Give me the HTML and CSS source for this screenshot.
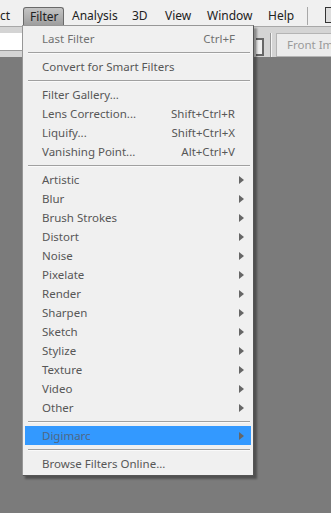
FILE: index.html
```html
<!DOCTYPE html>
<html lang="en">
<head>
  <meta charset="UTF-8" />
  <meta name="viewport" content="width=device-width, initial-scale=1.0" />
  <title>Filter menu</title>
  <link rel="stylesheet" href="styles.css">
</head>
<body>
  <div class="menubar">
    <span class="top-item cut">ct</span>
    <span class="top-item active">Filter</span>
    <span class="top-item w-analysis">Analysis</span>
    <span class="top-item w-3d">3D</span>
    <span class="top-item w-view">View</span>
    <span class="top-item w-window">Window</span>
    <span class="top-item w-help">Help</span>
    <span class="bar-sep"></span>
    <span class="bar-box"></span>
  </div>
  <div class="toolbar">
    <div class="field"></div>
    <div class="spacer"></div>
    <div class="spin"></div>
    <div class="tool-sep"></div>
    <div class="tool-btn">Front Image</div>
  </div>
  <div class="workspace"></div>

  <div class="dropdown">
    <div class="item disabled"><span>Last Filter</span><span class="key">Ctrl+F</span></div>
    <div class="sep"></div>
    <div class="item"><span>Convert for Smart Filters</span></div>
    <div class="sep"></div>
    <div class="item"><span>Filter Gallery...</span></div>
    <div class="item"><span>Lens Correction...</span><span class="key">Shift+Ctrl+R</span></div>
    <div class="item"><span>Liquify...</span><span class="key">Shift+Ctrl+X</span></div>
    <div class="item"><span>Vanishing Point...</span><span class="key">Alt+Ctrl+V</span></div>
    <div class="sep"></div>
    <div class="item sub"><span>Artistic</span><i class="arrow"></i></div>
    <div class="item sub"><span>Blur</span><i class="arrow"></i></div>
    <div class="item sub"><span>Brush Strokes</span><i class="arrow"></i></div>
    <div class="item sub"><span>Distort</span><i class="arrow"></i></div>
    <div class="item sub"><span>Noise</span><i class="arrow"></i></div>
    <div class="item sub"><span>Pixelate</span><i class="arrow"></i></div>
    <div class="item sub"><span>Render</span><i class="arrow"></i></div>
    <div class="item sub"><span>Sharpen</span><i class="arrow"></i></div>
    <div class="item sub"><span>Sketch</span><i class="arrow"></i></div>
    <div class="item sub"><span>Stylize</span><i class="arrow"></i></div>
    <div class="item sub"><span>Texture</span><i class="arrow"></i></div>
    <div class="item sub"><span>Video</span><i class="arrow"></i></div>
    <div class="item sub"><span>Other</span><i class="arrow"></i></div>
    <div class="sep"></div>
    <div class="item sub hover"><span>Digimarc</span><i class="arrow"></i></div>
    <div class="sep"></div>
    <div class="item"><span>Browse Filters Online...</span></div>
  </div>
</body>
</html>
```

FILE: styles.css
```css
body {
  margin: 0;
  font-family: "Noto Sans", "DejaVu Sans", sans-serif;
  font-size: 11.5px;
  background-color: #7b7b7b;
  height: 513px;
  overflow: hidden;
  position: relative;
}
.menubar {
  height: 26px;
  background-color: #f0f0f0;
  display: flex;
  align-items: flex-end;
  color: #222;
  font-size: 12px;
  box-sizing: border-box;
  padding-bottom: 1px;
  overflow: hidden;
}
.menubar > span {
  flex-shrink: 0;
}
.top-item {
  height: 18px;
  line-height: 17px;
  padding-left: 8px;
  box-sizing: border-box;
  white-space: nowrap;
}
.top-item.cut {
  padding: 0;
  width: 23px;
}
.top-item.active {
  width: 41px;
  padding-left: 6px;
  border: 1px solid #6a6a6a;
  border-bottom: none;
  border-radius: 3px 3px 0 0;
  background: linear-gradient(#c4c4c4, #9e9e9e);
}
.w-analysis { width: 60px; }
.w-3d { width: 33px; }
.w-view { width: 42px; }
.w-window { width: 61px; }
.w-help { width: 43px; }
.bar-sep {
  width: 1px;
  height: 18px;
  background-color: #a8a8a8;
  margin-left: 4px;
}
.bar-box {
  width: 12px;
  height: 14px;
  border: 1px solid #333;
  background-color: #ddd;
  margin-left: 17px;
  margin-bottom: 2px;
}
.toolbar {
  height: 31px;
  background-color: #d4d4d4;
  border-top: 1px solid #a8a8a8;
  display: flex;
  align-items: flex-start;
  box-sizing: border-box;
}
.field {
  width: 24px;
  height: 17px;
  margin-top: 6px;
  background-color: #fff;
  border-bottom: 1px solid #999;
}
.spacer {
  flex: 1;
}
.spin {
  width: 6px;
  height: 14px;
  margin-top: 11px;
  border: 2px solid #666;
  border-left: none;
  background-color: #eee;
}
.tool-sep {
  width: 1px;
  height: 24px;
  margin: 6px 5px 0 6px;
  background-color: #999;
  box-shadow: 1px 0 0 #f4f4f4;
}
.tool-btn {
  width: 56px;
  height: 24px;
  margin-top: 6px;
  margin-right: -1px;
  box-sizing: border-box;
  padding-left: 10px;
  line-height: 22px;
  background-color: #ececec;
  border: 1px solid #b4b4b4;
  color: #9a9a9a;
  white-space: nowrap;
  overflow: hidden;
}
.workspace {
  height: 456px;
}
.dropdown {
  position: absolute;
  left: 22px;
  top: 25px;
  width: 232px;
  box-sizing: border-box;
  background-color: #f0f0f0;
  border: 1px solid #979797;
  border-right-color: #555;
  border-bottom-color: #555;
  box-shadow: 3px 3px 2px rgba(0, 0, 0, 0.35);
  padding: 3px 2px 2px 2px;
  color: #575757;
}
.item {
  height: 19px;
  display: flex;
  align-items: center;
  padding: 0 16px 0 17px;
  white-space: nowrap;
}
.item .key {
  margin-left: auto;
}
.item.disabled {
  color: #707070;
}
.item.hover {
  background-color: #3399ff;
  color: #4f6784;
}
.arrow {
  margin-left: auto;
  margin-right: -9px;
  width: 0;
  height: 0;
  border-top: 4.5px solid transparent;
  border-bottom: 4.5px solid transparent;
  border-left: 5px solid #666;
}
.sep {
  height: 1px;
  margin: 4px 1px 3px 3px;
  background-color: #a0a0a0;
  border-bottom: 1px solid #fafafa;
}
```
